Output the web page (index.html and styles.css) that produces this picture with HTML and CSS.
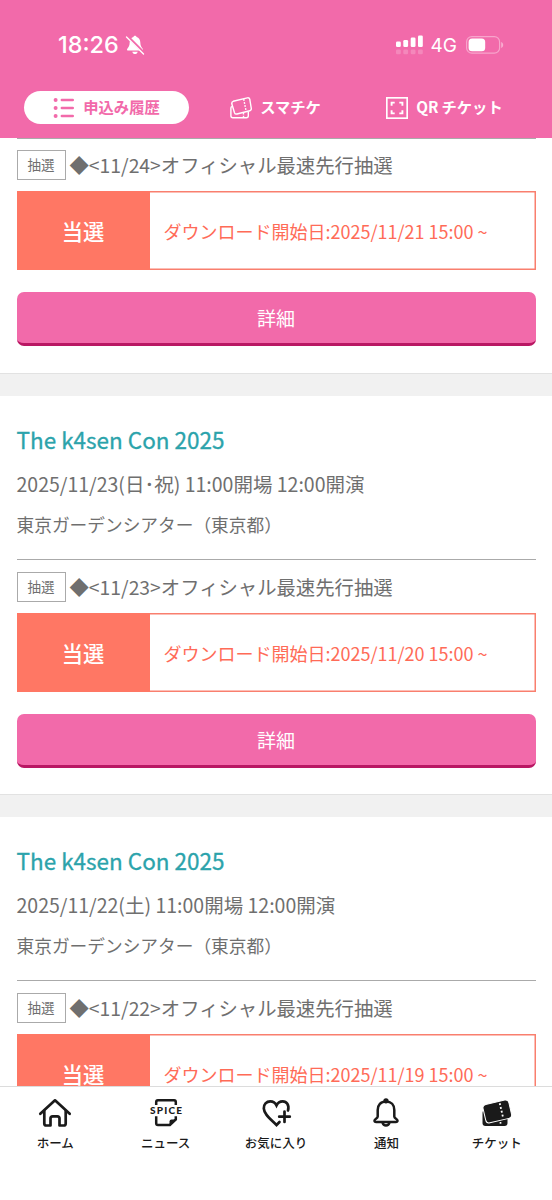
FILE: index.html
```html
<!DOCTYPE html>
<html lang="ja">
<head>
    <meta charset="UTF-8">
    <meta name="viewport" content="width=device-width, initial-scale=1.0">
    <title>申込み履歴</title>
    <link rel="stylesheet" href="styles.css">
</head>
<body>
    <header class="header">
        <div class="status-bar">
            <span class="clock">18:26</span>
            <svg class="mute" width="20" height="20" viewBox="0 0 20 20">
                <path d="M10 .7c.9 0 1.5.6 1.6 1.4 2.4.7 3.6 2.6 3.7 5.2.1 3.500.9 4.700 2.200 6.100.9 1 .5 2.100-.8 2.100H3.300c-1.300 0-1.700-1.100-.8-2.100 1.300-1.400 2.100-2.600 2.200-6.100.1-2.600 1.300-4.500 3.700-5.200C8.500 1.300 9.100.7 10 .7zM7.300 16.800h5.400c-.3 1.500-1.400 2.300-2.700 2.300s-2.400-.8-2.700-2.300z" fill="#fff"/>
                <path d="M2.300 1.300l17 17" stroke="#f26aaa" stroke-width="3"/>
                <path d="M1.500 1.900l17 17" stroke="#fff" stroke-width="1.400" stroke-linecap="round"/>
            </svg>
            <svg class="signal" width="28" height="20" viewBox="0 0 28 20">
                <g fill="#fff">
                    <rect x="0" y="6.500" width="4.800" height="5.500" rx="1.300"/>
                    <rect x="7.300" y="5" width="4.800" height="7" rx="1.300"/>
                    <rect x="14.700" y="2.500" width="4.800" height="9.500" rx="1.300"/>
                    <rect x="22" y="0.500" width="4.800" height="11.500" rx="1.300"/>
                </g>
                <g fill="#fff" opacity=".2">
                    <rect x="0" y="14.500" width="4.800" height="4.800" rx="1.300"/>
                    <rect x="7.300" y="14.500" width="4.800" height="4.800" rx="1.300"/>
                    <rect x="14.700" y="14.500" width="4.800" height="4.800" rx="1.300"/>
                    <rect x="22" y="14.500" width="4.800" height="4.800" rx="1.300"/>
                </g>
            </svg>
            <span class="network">4G</span>
            <svg class="battery" width="38" height="18" viewBox="0 0 38 18">
                <rect x=".6" y=".6" width="33" height="16.600" rx="5.300" fill="none" stroke="#fff" stroke-opacity=".4" stroke-width="1.200"/>
                <rect x="2.600" y="2.600" width="16.600" height="12.600" rx="3.500" fill="#fff"/>
                <path d="M35.200 6v6c1.300-.6 2-1.700 2-3s-.7-2.400-2-3z" fill="#fff" opacity=".45"/>
            </svg>
        </div>
        <nav class="tabs">
            <a class="tab active">
                <svg width="22" height="22" viewBox="0 0 22 22">
                    <path d="M8.800 3h11M8.800 11h11M8.800 19h11" stroke="#f26aaa" stroke-width="2.400" stroke-linecap="round"/>
                    <circle cx="2.600" cy="3" r="2" fill="#f26aaa"/>
                    <circle cx="2.600" cy="11" r="2" fill="#f26aaa"/>
                    <circle cx="2.600" cy="19" r="2" fill="#f26aaa"/>
                </svg>
                <span class="tab-label">申込み履歴</span>
            </a>
            <a class="tab">
                <svg width="22" height="22" viewBox="0 0 22 22" fill="none" stroke="#fff" stroke-width="1.400">
                    <path d="M3.200 4.300L17.300.9q2-.4 2.500 1.400l1.500 9.200q.2 1.700-1.500 2.300L7 17q-1.900.4-2.500-1.300L1.800 6.800q-.3-1.900 1.400-2.500z"/>
                    <path d="M1.900 9.400Q.9 10 .9 11.200v7.600q0 2 2 2h13.400q2 0 2-2v-4"/>
                    <path d="M13.700 2l2.400 12" stroke-dasharray="1.800 1.300"/>
                    <path d="M13.500 16v4.500" stroke-dasharray="1.500 1.200"/>
                </svg>
                <span class="tab-label">スマチケ</span>
            </a>
            <a class="tab">
                <svg width="22" height="22" viewBox="0 0 22 22" fill="none" stroke="#fff">
                    <rect x=".8" y=".8" width="20.400" height="20.400" stroke-width="1.700"/>
                    <path d="M5.600 8.700V5.600h3.100M13.300 5.600h3.100v3.100M16.400 13.300v3.100h-3.100M8.700 16.400H5.600v-3.100" stroke-width="1.900"/>
                </svg>
                <span class="tab-label">QR<span class="kana">チケット</span></span>
            </a>
        </nav>
    </header>

    <main class="history">
        <section class="entry">
            <div class="reception">
                <p class="reception-name"><span class="tag">抽選</span>◆&lt;11/24&gt;オフィシャル最速先行抽選</p>
                <div class="result">
                    <div class="result-status">当選</div>
                    <div class="result-text">ダウンロード開始日:2025/11/21 15:00 ~</div>
                </div>
                <button class="detail">詳細</button>
            </div>
        </section>

        <section class="entry">
            <h2>The k4sen Con 2025</h2>
            <p class="date">2025/11/23(日･祝) 11:00開場 12:00開演</p>
            <p class="venue">東京ガーデンシアター（東京都）</p>
            <div class="reception">
                <p class="reception-name"><span class="tag">抽選</span>◆&lt;11/23&gt;オフィシャル最速先行抽選</p>
                <div class="result">
                    <div class="result-status">当選</div>
                    <div class="result-text">ダウンロード開始日:2025/11/20 15:00 ~</div>
                </div>
                <button class="detail">詳細</button>
            </div>
        </section>

        <section class="entry">
            <h2>The k4sen Con 2025</h2>
            <p class="date">2025/11/22(土) 11:00開場 12:00開演</p>
            <p class="venue">東京ガーデンシアター（東京都）</p>
            <div class="reception">
                <p class="reception-name"><span class="tag">抽選</span>◆&lt;11/22&gt;オフィシャル最速先行抽選</p>
                <div class="result">
                    <div class="result-status">当選</div>
                    <div class="result-text">ダウンロード開始日:2025/11/19 15:00 ~</div>
                </div>
            </div>
        </section>
    </main>

    <footer class="bottom-nav">
        <a>
            <svg width="34" height="30" viewBox="0 0 34 30" fill="none" stroke="#1a1a1a" stroke-width="2.700" stroke-linejoin="round" stroke-linecap="round">
                <path d="M2.300 15.800L17 2.300l14.700 13.500"/>
                <path d="M6.300 13v12.500q0 2 2 2h4.200v-7q0-2.200 2.200-2.200h4.600q2.200 0 2.200 2.200v7h4.200q2 0 2-2V13"/>
            </svg>
            ホーム
        </a>
        <a>
            <svg width="34" height="30" viewBox="0 0 34 30" fill="none" stroke="#1a1a1a" stroke-width="2.500">
                <path d="M7.200 7V4q0-1.700 1.700-1.700h16.200q1.700 0 1.700 1.700v3M7.200 18.200v7q0 1.800 1.700 1.800h12l5.900-5.600v-3.200"/>
                <path d="M20.500 27v-3.500q0-2 2-2h5.300z" fill="#1a1a1a" stroke="none"/>
                <text class="spice" x="1" y="16.300" textLength="32">SPICE</text>
            </svg>
            ニュース
        </a>
        <a>
            <svg width="34" height="30" viewBox="0 0 34 30" fill="none" stroke="#1a1a1a" stroke-width="2.700" stroke-linecap="round">
                <path d="M29 12.500C30.500 7 27.500 3.300 23.700 3.300c-2.900 0-5 1.500-6.200 4-1.200-2.500-3.300-4-6.200-4-3.800 0-6.800 3-6.500 7.200C5.200 16.500 11 20.500 17.500 27l3-3"/>
                <path d="M25.500 13.500v10.500M20.200 18.700h10.600"/>
            </svg>
            お気に入り
        </a>
        <a>
            <svg width="34" height="30" viewBox="0 0 34 30" fill="none" stroke="#1a1a1a" stroke-width="2.500" stroke-linejoin="round">
                <path d="M17 3.500c-5.300 0-8.300 3.700-8.300 8.500v6.500c0 2-3.200 2.300-3.200 4 0 1 .7 1.500 1.700 1.500h19.600c1 0 1.700-.5 1.700-1.500 0-1.700-3.200-2-3.200-4V12c0-4.800-3-8.500-8.300-8.500z"/>
                <path d="M13.500 24.500q.8 3 3.500 3t3.500-3"/>
                <circle cx="17" cy="2.800" r="1.400"/>
            </svg>
            通知
        </a>
        <a>
            <svg width="34" height="30" viewBox="0 0 34 30">
                <rect x="2.500" y="12" width="25" height="16" rx="3" fill="#1a1a1a"/>
                <rect x="4" y="4" width="26.500" height="18.800" rx="3.500" transform="rotate(-13 17.300 13.200)" fill="#1a1a1a" stroke="#fff" stroke-width="1"/>
                <path d="M19.700 5.200l3.200 13.500" stroke="#fff" stroke-width="1.800" stroke-dasharray="1.900 2"/>
                <path d="M20.500 24v3" stroke="#fff" stroke-width="1.700" stroke-dasharray="1.700 1.300"/>
            </svg>
            チケット
        </a>
    </footer>
</body>
</html>
```
FILE: styles.css
```css
* {
    box-sizing: border-box;
}
body {
    margin: 0;
    height: 1200px;
    display: flex;
    flex-direction: column;
    overflow: hidden;
    background-color: #fff;
    color: #6f6f6f;
    font-family: "Noto Sans CJK JP", sans-serif;
}
h2, p {
    margin: 0;
    white-space: nowrap;
}
svg {
    flex: none;
}

/* header */
.header {
    flex: none;
    height: 138px;
    padding-top: 33px;
    background-color: #f26aaa;
    color: #fff;
}
.status-bar {
    display: flex;
    align-items: center;
    height: 24px;
    padding: 0 48px 0 58px;
    font-family: Inter, sans-serif;
}
.clock {
    font-size: 23.4px;
    font-weight: 500;
    line-height: 24px;
    padding-bottom: 1px;
    width: 67px;
}
.signal {
    margin-left: auto;
}
.network {
    margin: 0 9px 0 7px;
    font-size: 19px;
}
.tabs {
    display: grid;
    grid-template-columns: repeat(3, 165px);
    column-gap: 4px;
    margin: 34px 0 0 24px;
}
.tab {
    height: 33px;
    display: flex;
    align-items: center;
    justify-content: center;
    gap: 8px;
    border-radius: 17px;
    font-size: 15.3px;
    font-weight: 700;
    white-space: nowrap;
}
.tab.active {
    background-color: #fff;
    color: #f26aaa;
}
.tab-label {
    padding-bottom: 3px;
}
.kana {
    margin-left: 3px;
}

/* history */
.history {
    flex: none;
    height: 948px;
    overflow: hidden;
}
.entry {
    height: 421.5px;
    padding: 0 16.5px;
    border-bottom: 22px solid #f1f1f1;
    box-shadow: inset 0 -1px #e2e2e2;
}
.entry:first-child {
    height: 257.5px;
}
h2 {
    padding-top: 26px;
    font-size: 22.5px;
    font-weight: 400;
    line-height: 35px;
    color: #2ba3ab;
    -webkit-text-stroke: 0.3px #2ba3ab;
}
.date {
    padding-top: 12px;
    font-size: 19.5px;
    line-height: 30px;
}
.venue {
    padding-top: 11px;
    height: 60px;
    font-size: 17.7px;
    line-height: 28px;
}
.reception {
    border-top: 1px solid #aaa;
    padding-top: 12px;
}
.entry:first-child .reception {
    padding-top: 11px;
}
.reception-name {
    display: flex;
    align-items: center;
    height: 30px;
    font-size: 19.35px;
    line-height: 28px;
}
.tag {
    width: 49px;
    height: 30px;
    margin-right: 4px;
    border: 1px solid #aaa;
    font-size: 13.5px;
    line-height: 27px;
    text-align: center;
}
.result {
    display: flex;
    height: 79px;
    margin-top: 11px;
    box-shadow: inset 0 0 0 1.5px #f97f6e;
}
.result-status {
    width: 133px;
    background-color: #ff7764;
    color: #fff;
    font-size: 21.3px;
    font-weight: 500;
    line-height: 79px;
    text-align: center;
}
.result-text {
    padding-left: 14px;
    color: #ff6b57;
    font-size: 18px;
    line-height: 80px;
    white-space: nowrap;
}
.detail {
    display: block;
    width: 100%;
    height: 54px;
    margin-top: 22px;
    padding: 0;
    border: 0;
    border-bottom: 3px solid #b91763;
    border-radius: 7px;
    background-color: #f26aaa;
    color: #fff;
    font-family: inherit;
    font-size: 19px;
}

/* bottom navigation */
.bottom-nav {
    flex: 1;
    display: grid;
    grid-template-columns: repeat(5, 1fr);
    padding-top: 11px;
    border-top: 1px solid #dcdcdc;
    color: #1a1a1a;
    font-size: 12.5px;
    font-weight: 500;
    line-height: 18px;
}
.bottom-nav a {
    display: flex;
    flex-direction: column;
    align-items: center;
    gap: 6px;
}
.spice {
    fill: #1a1a1a;
    stroke: none;
    font-family: Lato, sans-serif;
    font-size: 10px;
    font-weight: 900;
}
```
